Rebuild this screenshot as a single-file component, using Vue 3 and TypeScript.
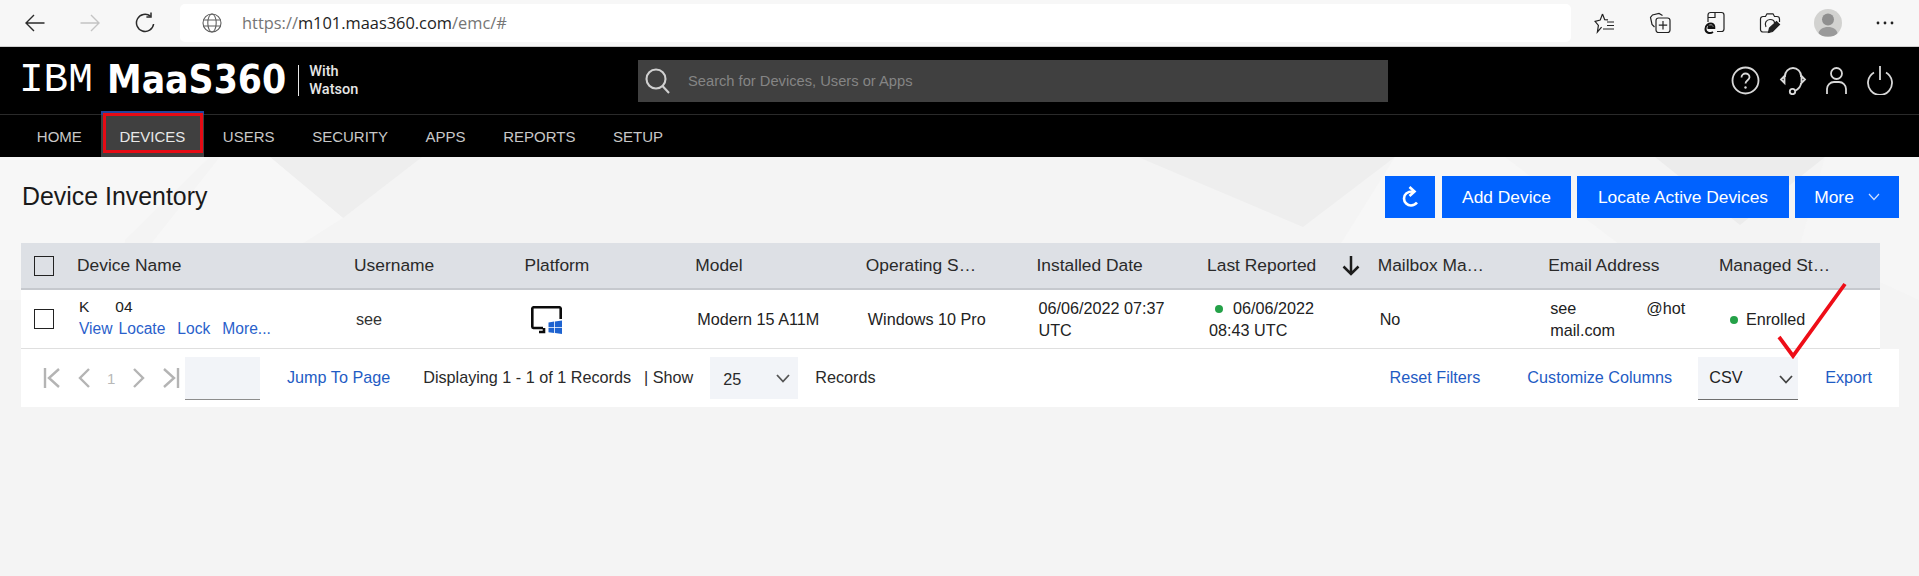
<script setup lang="ts">
const navItems = ['HOME', 'DEVICES', 'USERS', 'SECURITY', 'APPS', 'REPORTS', 'SETUP']
</script>

<template>
  <div class="root">
    <div class="chrome">
      <svg class="c-back" width="20" height="20" viewBox="0 0 20 20" fill="none" stroke="#2b2b2b" stroke-width="1.4"><path d="M19.5 10H1M9 2l-8 8 8 8" /></svg>
      <svg class="c-fwd" width="20" height="20" viewBox="0 0 20 20" fill="none" stroke="#c4c4c4" stroke-width="1.4"><path d="M.5 10H19M11 2l8 8-8 8" /></svg>
      <svg class="c-rel" width="20" height="22" viewBox="0 0 20 22" fill="none" stroke="#2b2b2b" stroke-width="1.5"><path d="M15.5 4.2A8.6 8.6 0 1 0 18.6 12" /><path d="M16 .5v4.4h-4.6" /></svg>
      <div class="addr">
        <svg width="20" height="20" viewBox="0 0 20 20" fill="none" stroke="#5f5f5f" stroke-width="1.1"><circle cx="10" cy="10" r="9" /><ellipse cx="10" cy="10" rx="4.2" ry="9" /><path d="M1 7h18M1 13h18" /></svg>
        <span class="url"><i>https://</i>m101.maas360.com<i>/emc/#</i></span>
      </div>
      <div class="c-tools">
        <svg class="t1" width="22" height="22" viewBox="0 0 22 22" fill="none" stroke="#222" stroke-width="1.2"><path d="M8.5 2l2.2 5.6 3.3.3M7.6 15.2 3.4 20l1-6.600L1 9.300l5.200-1.200L8.500 2" /><path d="M13 10h7M13 13.500h7M9 17h11" /></svg>
        <svg class="t2" width="22" height="22" viewBox="0 0 22 22" fill="none" stroke="#222" stroke-width="1.2"><path d="M13.500 3.500 10 1.500 3.500 3 1.500 5.500 3 12.500 5.500 15" /><rect x="7" y="6" width="14" height="14.500" rx="2.500" /><path d="M14 9v8.500M9.800 13.200h8.400" /></svg>
        <svg class="t3" width="22" height="24" viewBox="0 0 22 24" fill="none" stroke="#222" stroke-width="1.200"><path d="M4 11V4a2.500 2.500 0 0 1 2.500-2.500h11A2.500 2.500 0 0 1 20 4v14a2.500 2.500 0 0 1-2.500 2.500H13" /><path d="M4 6.500h7V1.500" /><path d="M9 21c-3 2-7.500 1-7.500-3S4.500 12.500 7 12.500c2.500 0 3.500 2 3.300 4.500H3.500M3.800 15.200h5" stroke="#111" stroke-width="2" /></svg>
        <svg class="t4" width="22" height="22" viewBox="0 0 22 22" fill="none" stroke="#222" stroke-width="1.200"><path d="M11 20H4a2.500 2.500 0 0 1-2.500-2.500V7A2.500 2.500 0 0 1 4 4.500h2.500L8 1.800h6l1.500 2.700H18A2.500 2.500 0 0 1 20.500 7v3" /><path d="M7 15c-2-4 .5-7.500 4-7.500s4.500 2 4.500 3.500" /><path d="M9.500 20.500 10.500 16 17.500 9.500 20.500 12.500 13.500 19.500Z" fill="#222" /></svg>
        <div class="avatar"><svg width="28" height="28" viewBox="0 0 28 28"><circle cx="14" cy="10.500" r="6" fill="#8f8f8f" /><path d="M4 26c1-6 5-8 10-8s9 2 10 8c-3 2-17 2-20 0Z" fill="#9a9a9a" /></svg></div>
        <svg class="t6" width="18" height="4" viewBox="0 0 18 4" fill="#222"><circle cx="2" cy="2" r="1.400" /><circle cx="9" cy="2" r="1.400" /><circle cx="16" cy="2" r="1.400" /></svg>
      </div>
    </div>

    <header class="top">
      <div class="logo">
        <span class="ibm">IBM</span>
        <span class="maas">MaaS360</span>
        <span class="bar"></span>
        <span class="watson">With<br />Watson</span>
      </div>
      <div class="search">
        <svg width="26" height="26" viewBox="0 0 26 26" fill="none" stroke="#d0d0d0" stroke-width="2.100"><circle cx="11" cy="11" r="9.500" /><path d="M17.500 18l6.500 7" /></svg>
        <span>Search for Devices, Users or Apps</span>
      </div>
      <div class="top-icons">
        <svg width="29" height="29" viewBox="0 0 29 29" fill="none" stroke="#d8d8d8" stroke-width="1.800"><circle cx="14.500" cy="14.500" r="13" /><path d="M10.500 11.500c0-2.500 2-4 4-4s4 1.500 4 3.700c0 3-4 3-4 6.300" /><circle cx="14.500" cy="21.500" r="1.200" fill="#d8d8d8" stroke="none" /></svg>
        <svg class="i-head" width="28" height="29" viewBox="0 0 28 29" fill="none" stroke="#d8d8d8" stroke-width="1.800"><path d="M6 11V10a8 8 0 0 1 16 0V11" /><path d="M5.500 10 2 13.500 5.500 17ZM22.500 10l3.500 3.500L22.500 17Z" /><path d="M22 17c0 4-2.500 6-6 8" /><circle cx="13.500" cy="25.500" r="2.700" /></svg>
        <svg class="i-user" width="21" height="28" viewBox="0 0 21 28" fill="none" stroke="#d8d8d8" stroke-width="1.800"><circle cx="10.500" cy="6.500" r="5.500" /><path d="M1 27v-5a7 7 0 0 1 7-7h5a7 7 0 0 1 7 7v5" /></svg>
        <svg class="i-pow" width="26" height="29" viewBox="0 0 26 29" fill="none" stroke="#d8d8d8" stroke-width="1.800"><path d="M7 6.500a12 12 0 1 0 12 0M13 0v14" /></svg>
      </div>
    </header>

    <nav class="nav">
      <a v-for="item in navItems" :key="item" class="nav-item" :class="{ active: item === 'DEVICES' }">{{ item }}</a>
    </nav>

    <main class="page">
      <svg class="bg" width="1919" height="419" viewBox="0 157 1919 419">
        <polygon points="0,157 210,157 125,240 120,300 0,300" fill="#f7f7f7" />
        <polygon points="270,157 422,157 343,218" fill="#eeeeee" />
        <polygon points="220,157 270,157 343,218 300,245 150,245" fill="#f7f7f7" />
        <polygon points="1138,157 1395,157 1303,227" fill="#eeeeee" />
        <polygon points="1395,157 1505,157 1620,245 1340,245" fill="#f7f7f7" />
        <polygon points="1655,157 1825,157 1740,225" fill="#ececec" />
        <polygon points="1825,157 1919,157 1919,300 1800,245" fill="#f6f6f6" />
      </svg>

      <div class="content">
        <div class="title-row">
          <h1>Device Inventory</h1>
          <div class="btns">
            <button class="btn b-ref">
              <svg width="16" height="22" viewBox="0 0 16 22" fill="none" stroke="#fff" stroke-width="2.600"><path d="M11 5.500C5 5.500 2 8.500 2 12.500s3.500 7 7 7c2.500 0 4.500-1 6-3" /><path d="M7.500 1 12.500 5.500 7.500 10" /></svg>
            </button>
            <button class="btn b-add">Add Device</button>
            <button class="btn b-loc">Locate Active Devices</button>
            <button class="btn b-more">More
              <svg width="12" height="8" viewBox="0 0 12 8" fill="none" stroke="#cfe0ff" stroke-width="1.200"><path d="M1 1l5 5.500L11 1" /></svg>
            </button>
          </div>
        </div>

        <div class="table">
          <div class="grid head">
            <div class="cb-cell"><span class="cb"></span></div>
            <div>Device Name</div>
            <div>Username</div>
            <div>Platform</div>
            <div>Model</div>
            <div>Operating S…</div>
            <div>Installed Date</div>
            <div class="last-h">Last Reported
              <svg width="18" height="20" viewBox="0 0 18 20" fill="none" stroke="#1c1c1c" stroke-width="2.500"><path d="M9 0v18M1.500 10.500 9 18l7.500-7.500" /></svg>
            </div>
            <div>Mailbox Ma…</div>
            <div>Email Address</div>
            <div>Managed St…</div>
          </div>

          <div class="grid row">
            <div class="cb-cell"><span class="cb"></span></div>
            <div class="name">
              <div class="dev"><span>K</span><span class="dev2">04</span></div>
              <div class="links"><a>View</a><a>Locate</a><a>Lock</a><a>More...</a></div>
            </div>
            <div class="user">see</div>
            <div class="plat">
              <svg width="31" height="28" viewBox="0 0 31 28">
                <path d="M12 22H2.500A1.500 1.500 0 0 1 1.300 20.500V2.500A1.500 1.500 0 0 1 2.500 1.300h26A1.500 1.500 0 0 1 29.700 2.500V13M13 22v4H8" fill="none" stroke="#0b0b0b" stroke-width="2.600" />
                <path d="M17.500 16.500l5.700-.9v5.400h-5.700zM24 15.400l7-1v6.600h-7zM17.500 21.700h5.700v5.300l-5.700-.8zM24 21.700h7V28l-7-.9z" fill="#1e63d0" />
              </svg>
            </div>
            <div>Modern 15 A11M</div>
            <div>Windows 10 Pro</div>
            <div class="two">06/06/2022 07:37<br />UTC</div>
            <div class="two rep"><i class="dot"></i>06/06/2022<br />08:43 UTC</div>
            <div>No</div>
            <div class="two"><span class="mail1"><span>see</span><span>@hot</span></span>mail.com</div>
            <div class="enr"><i class="dot"></i>Enrolled</div>
          </div>
        </div>

        <div class="foot">
          <div class="pager">
            <svg width="18" height="20" viewBox="0 0 18 20" fill="none" stroke="#b4b4b4" stroke-width="2.400"><path d="M2 0v20M16 1 6 10l10 9" /></svg>
            <svg class="p-prev" width="12" height="20" viewBox="0 0 12 20" fill="none" stroke="#b4b4b4" stroke-width="2.400"><path d="M11 1 2 10l9 9" /></svg>
            <span class="p-num">1</span>
            <svg class="p-next" width="12" height="20" viewBox="0 0 12 20" fill="none" stroke="#b4b4b4" stroke-width="2.400"><path d="M1 1l9 9-9 9" /></svg>
            <svg class="p-last" width="18" height="20" viewBox="0 0 18 20" fill="none" stroke="#b4b4b4" stroke-width="2.400"><path d="M16 0v20M2 1l10 9-10 9" /></svg>
          </div>
          <div class="jump"></div>
          <a class="f-jump">Jump To Page</a>
          <span class="f-disp">Displaying 1 - 1 of 1 Records</span>
          <span class="f-show">| Show</span>
          <div class="sel sel25"><span>25</span>
            <svg width="14" height="9" viewBox="0 0 14 9" fill="none" stroke="#555" stroke-width="1.800"><path d="M1 1l6 6.500L13 1" /></svg>
          </div>
          <span class="f-rec">Records</span>
          <a class="f-reset">Reset Filters</a>
          <a class="f-cust">Customize Columns</a>
          <div class="sel csv"><span>CSV</span>
            <svg width="14" height="9" viewBox="0 0 14 9" fill="none" stroke="#444" stroke-width="1.800"><path d="M1 1l6 6.500L13 1" /></svg>
          </div>
          <a class="f-exp">Export</a>
        </div>
      </div>

      <svg class="check" width="70" height="78" viewBox="0 0 70 78" fill="none" stroke="#ee0d17" stroke-width="3.800"><path d="M2 55l14 19L68 2" /></svg>
    </main>
  </div>
</template>

<style scoped>
.root { font-family: "Liberation Sans", Arial, sans-serif; color: #1d1d1d; width: 1919px; height: 576px; overflow: hidden; display: flex; flex-direction: column; }
.chrome { height: 46px; background: #f7f7f7; border-bottom: 1px solid #cfcfcf; display: flex; align-items: center; flex: none; padding-left: 25px; }
.c-fwd { margin-left: 35px; }
.c-rel { margin-left: 35px; }
.addr { margin-left: 25px; width: 1391px; height: 38px; background: #fff; border-radius: 5px; display: flex; align-items: center; padding-left: 22px; box-sizing: border-box; }
.url { margin-left: 20px; margin-top: -2px; font-family: "Open Sans", sans-serif; font-size: 16.4px; color: #1e1e1e; }
.url i { font-style: normal; color: #757575; }
.c-tools { display: flex; align-items: center; }
.t1 { margin-left: 23px; }
.t2 { margin-left: 33px; }
.t3 { margin-left: 33px; }
.t4 { margin-left: 33px; }
.avatar { margin-left: 33px; width: 28px; height: 28px; border-radius: 50%; background: #d2d2d0; overflow: hidden; }
.avatar svg { display: block; }
.t6 { margin-left: 34px; }

.top { height: 67px; background: #000; border-bottom: 1px solid #2a2a2a; display: flex; align-items: center; flex: none; }
.logo { width: 638px; padding-left: 19px; box-sizing: border-box; display: flex; align-items: center; color: #fff; flex: none; }
.ibm { font-family: "Liberation Mono", monospace; font-size: 41px; width: 73px; line-height: 1; }
.maas { font-family: "DejaVu Sans", sans-serif; font-weight: 700; font-size: 34.800px; margin-left: 15px; line-height: 1; transform: scaleY(1.1); }
.bar { width: 1px; height: 31px; background: #e8e8e8; margin-left: 12px; }
.watson { font-family: "Roboto", sans-serif; font-size: 14.500px; line-height: 18px; font-weight: 500; margin-left: 10px; color: #e6e6e6; }
.search { width: 750px; height: 42px; background: #404040; display: flex; align-items: center; padding-left: 7px; box-sizing: border-box; flex: none; }
.search span { margin-left: 17px; font-size: 14.700px; color: #858585; }
.top-icons { display: flex; align-items: center; margin-left: 343px; }
.i-head { margin-left: 19px; }
.i-user { margin-left: 19px; }
.i-pow { margin-left: 20px; }

.nav { height: 42px; background: #000; display: flex; padding-left: 18px; flex: none; }
.nav-item { padding: 0 18.800px; display: flex; align-items: center; font-size: 15px; color: #c8c8c8; position: relative; }
.nav-item.active { background: #404040; color: #e8e8e8; }
.nav-item.active::before { content: ""; position: absolute; left: 0; right: 0; top: -4px; height: 4px; background: #23459c; }
.nav-item.active::after { content: ""; position: absolute; left: 2px; right: 1px; top: -2px; height: 40px; border: 3px solid #e60b15; box-sizing: border-box; }

.page { position: relative; flex: 1; background: #f4f4f4; overflow: hidden; }
.bg { position: absolute; left: 0; top: 0; }
.content { position: relative; padding: 19px 20px 0 21px; }
.title-row { height: 42px; display: flex; align-items: center; justify-content: space-between; margin-bottom: 25px; }
h1 { margin: 0 0 2px 1px; font-size: 24.900px; font-weight: 400; color: #1a1a1a; }
.btns { display: flex; }
.btn { height: 42px; background: #0062ff; border: 0; color: #fff; font: inherit; font-size: 17.400px; padding: 0; display: flex; align-items: center; justify-content: center; }
.b-ref { width: 50px; }
.b-add { width: 129px; margin-left: 7px; }
.b-loc { width: 212px; margin-left: 6px; }
.b-more { width: 104px; margin-left: 6px; }
.b-more svg { margin-left: 14px; }

.table { width: 1859px; }
.grid { display: grid; grid-template-columns: 56px 277px repeat(8, 170.62px) 1fr; align-items: center; }
.head { height: 45px; background: #dde0e5; border-bottom: 2px solid #c6c9ce; font-size: 17.400px; color: #2a2a2a; }
.row { height: 58px; background: #fff; font-size: 16.200px; color: #222; border-bottom: 1px solid #dfdfdf; }
.row > div { padding-left: 2px; padding-top: 1px; }
.row > .cb-cell { padding-left: 13px; padding-top: 0; }
.row > .two { padding-top: 0; margin-top: -1px; }
.row > .name { padding-top: 0; }
.cb-cell { padding-left: 13px; display: flex; }
.cb { width: 20px; height: 20px; border: 1px solid #222; box-sizing: border-box; background: transparent; display: block; }
.last-h { display: flex; align-items: center; }
.last-h svg { margin-left: 26px; margin-top: 1px; flex: none; }
.name { line-height: 22px; }
.dev { height: 22px; font-size: 15.500px; margin-top: -2px; }
.dev2 { margin-left: 26px; }
.links { font-size: 15.600px; }
.links a { color: #2a5fcb; margin-right: 12px; }
.links a:first-child { margin-right: 6px; }
.user { color: #333; }
.plat { padding-left: 6px !important; display: flex; }
.two { line-height: 22px; }
.rep .dot { margin: 0 10px 1px 6px; }
.dot { display: inline-block; width: 8px; height: 8px; border-radius: 50%; background: #24a148; vertical-align: middle; }
.enr { padding-left: 11px !important; }
.enr .dot { margin: 0 8px 2px 0; }
.mail1 { display: flex; width: 135px; justify-content: space-between; }

.foot { height: 58px; background: #fff; display: flex; align-items: center; padding-left: 22px; padding-right: 27px; font-size: 16.200px; color: #2a2a2a; }
.foot > a, .foot > span { margin-bottom: 2px; }
.foot a { color: #1f5cc4; }
.pager { display: flex; align-items: center; height: 20px; }
.p-prev { margin-left: 17px; }
.p-num { margin-left: 17px; width: 6px; font-size: 15px; color: #b8b8b8; }
.p-next { margin-left: 20px; }
.p-last { margin-left: 17px; }
.jump { margin-left: 5px; width: 75px; height: 43px; background: #f2f4f8; border-bottom: 1px solid #8d8d8d; box-sizing: border-box; }
.f-jump { margin-left: 27px; }
.f-disp { margin-left: 33px; }
.f-show { margin-left: 13px; }
.sel { height: 43px; background: #f2f4f8; display: flex; align-items: center; box-sizing: border-box; justify-content: space-between; }
.sel25 { margin-left: 17px; width: 88px; height: 42px; padding: 3px 8px 0 13px; }
.sel25 svg { margin-top: -3px; }
.f-rec { margin-left: 17px; }
.f-reset { margin-left: auto; }
.f-cust { margin-left: 47px; }
.csv { margin-left: 26px; width: 100px; padding: 0 5px 0 11px; border-bottom: 1px solid #6f6f6f; color: #222; }
.csv svg { margin-top: 4px; }
.f-exp { margin-left: 27px; }
.check { position: absolute; left: 1777px; top: 125px; }
</style>

<style>
html, body { margin: 0; background: #f4f4f4; }
</style>
